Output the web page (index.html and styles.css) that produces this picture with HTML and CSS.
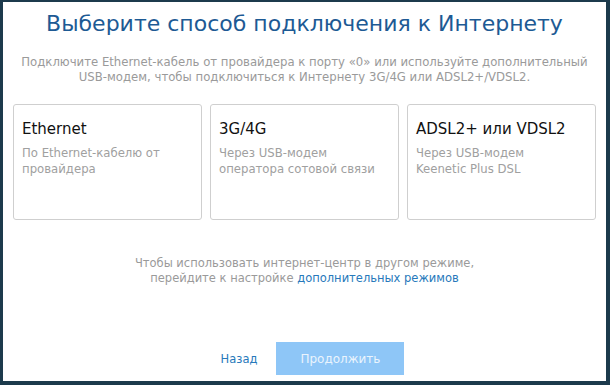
FILE: index.html
```html
<!DOCTYPE html>
<html lang="ru">

<head>
    <meta charset="UTF-8">
    <title>Подключение к Интернету</title>
    <link rel="stylesheet" href="styles.css">
</head>

<body>
    <div class="frame">
        <h1 class="title">Выберите способ подключения к Интернету</h1>
        <p class="lead">Подключите Ethernet-кабель от провайдера к порту «0» или используйте дополнительный
            USB-модем, чтобы подключиться к Интернету 3G/4G или ADSL2+/VDSL2.</p>

        <div class="cards">
            <div class="card">
                <div class="card-title">Ethernet</div>
                <div class="card-text">По Ethernet-кабелю от провайдера</div>
            </div>
            <div class="card">
                <div class="card-title">3G/4G</div>
                <div class="card-text">Через USB-модем оператора сотовой связи</div>
            </div>
            <div class="card">
                <div class="card-title">ADSL2+ или VDSL2</div>
                <div class="card-text">Через USB-модем<br>Keenetic Plus DSL</div>
            </div>
        </div>

        <p class="note">Чтобы использовать интернет-центр в другом режиме,<br>
            перейдите к настройке <a href="#">дополнительных режимов</a></p>

        <div class="actions">
            <a class="back" href="#">Назад</a>
            <button class="next" disabled>Продолжить</button>
        </div>
    </div>
</body>

</html>
```

FILE: styles.css
```css
html,
body {
    margin: 0;
    padding: 0;
    background-color: #1c3a4c;
}

.frame {
    box-sizing: border-box;
    width: 610px;
    height: 385px;
    border-style: solid;
    border-color: #1c3a4c;
    border-width: 2px 4px 4px 3px;
    background-color: #fff;
    font-family: "DejaVu Sans", Verdana, sans-serif;
    display: flex;
    flex-direction: column;
}

.title {
    margin: 8px 0 0;
    font-size: 22px;
    font-weight: normal;
    line-height: 28px;
    text-align: center;
    color: #1d5a94;
}

.lead {
    margin: 17px 0 0;
    padding: 0 14px;
    font-size: 11.7px;
    line-height: 15px;
    text-align: center;
    color: #9a9a9a;
}

.cards {
    display: grid;
    grid-template-columns: repeat(3, 1fr);
    gap: 8px;
    margin-top: 19px;
    padding: 0 10px;
}

.card {
    box-sizing: border-box;
    height: 116px;
    border: 1px solid #cfcfcf;
    border-radius: 3px;
    padding: 14px 8px 0;
}

.card-title {
    font-size: 15px;
    line-height: 20px;
    color: #111;
}

.card-text {
    margin-top: 6px;
    font-size: 11.7px;
    line-height: 16px;
    color: #a0a0a0;
}

.note {
    margin: 36px 0 0;
    font-size: 11.5px;
    line-height: 15px;
    text-align: center;
    color: #9a9a9a;
}

.note a {
    color: #2779bb;
    text-decoration: none;
}

.actions {
    display: flex;
    justify-content: center;
    align-items: center;
    gap: 19px;
    margin-top: auto;
    margin-bottom: 6px;
    padding-left: 16px;
}

.back {
    font-size: 11.5px;
    color: #2779bb;
    text-decoration: none;
}

.next {
    width: 128px;
    height: 33px;
    border: none;
    background-color: #8ec6f7;
    color: #eaf4fd;
    font-family: inherit;
    font-size: 12px;
}
```
